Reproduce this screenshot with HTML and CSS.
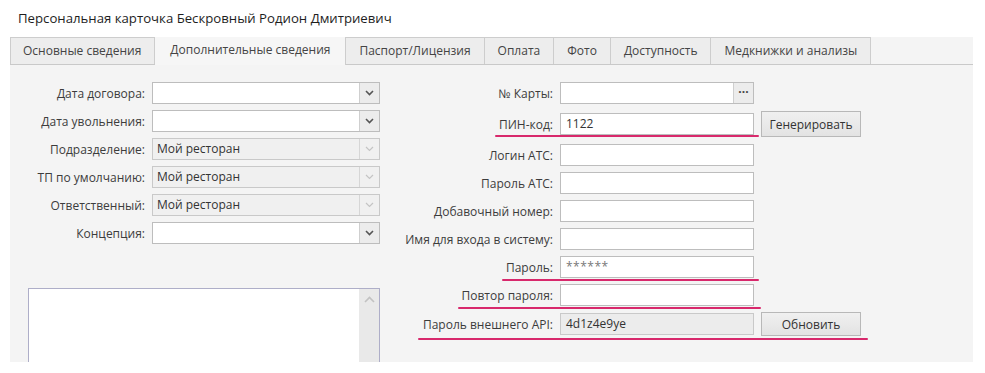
FILE: index.html
```html
<!DOCTYPE html>
<html lang="ru">
<head>
    <meta charset="UTF-8">
    <meta name="viewport" content="width=device-width, initial-scale=1.0">
    <title>Персональная карточка</title>
    <link rel="stylesheet" href="styles.css">
</head>
<body>

    <!-- Заголовок карточки -->
    <h1 class="card-title">Персональная карточка Бескровный Родион Дмитриевич</h1>

    <div class="card">
        <!-- Вкладки -->
        <ul class="tabs">
            <li class="tab">Основные сведения</li>
            <li class="tab active">Дополнительные сведения</li>
            <li class="tab">Паспорт/Лицензия</li>
            <li class="tab">Оплата</li>
            <li class="tab">Фото</li>
            <li class="tab">Доступность</li>
            <li class="tab">Медкнижки и анализы</li>
        </ul>

        <div class="card-body">
            <!-- Левая колонка -->
            <div class="col-left">
                <div class="form-left">
                    <label class="lbl">Дата договора:</label>
                    <div class="combo">
                        <span class="combo-text"></span>
                        <span class="combo-btn"><svg width="9" height="6" viewBox="0 0 9 6"><polyline points="1,1 4.5,4.5 8,1" fill="none" stroke="#555" stroke-width="1.6"/></svg></span>
                    </div>

                    <label class="lbl">Дата увольнения:</label>
                    <div class="combo">
                        <span class="combo-text"></span>
                        <span class="combo-btn"><svg width="9" height="6" viewBox="0 0 9 6"><polyline points="1,1 4.5,4.5 8,1" fill="none" stroke="#555" stroke-width="1.6"/></svg></span>
                    </div>

                    <label class="lbl">Подразделение:</label>
                    <div class="combo disabled">
                        <span class="combo-text">Мой ресторан</span>
                        <span class="combo-btn"><svg width="9" height="6" viewBox="0 0 9 6"><polyline points="1,1 4.5,4.5 8,1" fill="none" stroke="#c4c4c4" stroke-width="1.2"/></svg></span>
                    </div>

                    <label class="lbl">ТП по умолчанию:</label>
                    <div class="combo disabled">
                        <span class="combo-text">Мой ресторан</span>
                        <span class="combo-btn"><svg width="9" height="6" viewBox="0 0 9 6"><polyline points="1,1 4.5,4.5 8,1" fill="none" stroke="#c4c4c4" stroke-width="1.2"/></svg></span>
                    </div>

                    <label class="lbl">Ответственный:</label>
                    <div class="combo disabled">
                        <span class="combo-text">Мой ресторан</span>
                        <span class="combo-btn"><svg width="9" height="6" viewBox="0 0 9 6"><polyline points="1,1 4.5,4.5 8,1" fill="none" stroke="#c4c4c4" stroke-width="1.2"/></svg></span>
                    </div>

                    <label class="lbl">Концепция:</label>
                    <div class="combo">
                        <span class="combo-text"></span>
                        <span class="combo-btn"><svg width="9" height="6" viewBox="0 0 9 6"><polyline points="1,1 4.5,4.5 8,1" fill="none" stroke="#555" stroke-width="1.6"/></svg></span>
                    </div>
                </div>

                <!-- Поле комментария -->
                <div class="memo">
                    <div class="memo-area"></div>
                    <div class="memo-scroll"><svg width="11" height="7" viewBox="0 0 11 7"><polyline points="1,6 5.5,1.5 10,6" fill="none" stroke="#c2c2c2" stroke-width="1.6"/></svg></div>
                </div>
            </div>

            <!-- Правая колонка -->
            <div class="col-right">
                <div class="row">
                    <label class="lbl">№ Карты:</label>
                    <div class="field with-dots">
                        <span class="field-text"></span>
                        <span class="dots-btn">···</span>
                    </div>
                </div>

                <div class="row row-pin">
                    <label class="lbl">ПИН-код:</label>
                    <div class="field"><span class="field-text">1122</span></div>
                    <button class="btn btn-tall">Генерировать</button>
                    <span class="mark mark-pin"></span>
                </div>

                <div class="row">
                    <label class="lbl">Логин АТС:</label>
                    <div class="field"></div>
                </div>

                <div class="row">
                    <label class="lbl">Пароль АТС:</label>
                    <div class="field"></div>
                </div>

                <div class="row">
                    <label class="lbl">Добавочный номер:</label>
                    <div class="field"></div>
                </div>

                <div class="row">
                    <label class="lbl">Имя для входа в систему:</label>
                    <div class="field"></div>
                </div>

                <div class="row">
                    <label class="lbl">Пароль:</label>
                    <div class="field"><span class="field-text stars">******</span></div>
                    <span class="mark mark-pass"></span>
                </div>

                <div class="row">
                    <label class="lbl">Повтор пароля:</label>
                    <div class="field"></div>
                    <span class="mark mark-repeat"></span>
                </div>

                <div class="row">
                    <label class="lbl">Пароль внешнего API:</label>
                    <div class="field disabled"><span class="field-text">4d1z4e9ye</span></div>
                    <button class="btn">Обновить</button>
                    <span class="mark mark-api"></span>
                </div>
            </div>
        </div>
    </div>

</body>
</html>
```

FILE: styles.css
```css
/* Сброс отступов */
* {
    box-sizing: border-box;
    margin: 0;
    padding: 0;
}

body {
    background-color: #fff;
    font-family: "Open Sans", "Liberation Sans", sans-serif;
    font-size: 12px;
    color: #3a3a3a;
}

/* Заголовок */
.card-title {
    font-size: 13.2px;
    font-weight: normal;
    line-height: 16px;
    color: #1e1e1e;
    padding: 10px 0 11px 18px;
}

/* Карточка с вкладками */
.card {
    margin-left: 10px;
    width: 963px;
    height: 325px;
    background-color: #f4f4f4;
    overflow: hidden;
}

.tabs {
    list-style: none;
    display: flex;
    align-items: flex-end;
    height: 28px;
    border-bottom: 1px solid #c9c9c9;
}

.tab {
    height: 27px;
    line-height: 25px;
    padding: 0 13px;
    background-color: #ededed;
    border: 1px solid #cdcdcd;
    border-bottom: none;
    border-left: none;
    color: #444;
}

.tab:first-child {
    border-left: 1px solid #cdcdcd;
    padding: 0 13px 0 12px;
}

.tab.active {
    height: 29px;
    margin-bottom: -1px;
    line-height: 26px;
    padding: 0 15px 0 15px;
    background-color: #f6f6f6;
}

/* Тело карточки */
.card-body {
    display: flex;
    padding-top: 17px;
}

.col-left {
    width: 370px;
}

.form-left {
    display: grid;
    grid-template-columns: 135px 228px;
    grid-auto-rows: 22px;
    column-gap: 7px;
    row-gap: 6px;
    align-items: center;
}

.lbl {
    text-align: right;
    white-space: nowrap;
    color: #3c3c3c;
}

/* Выпадающий список */
.combo {
    display: flex;
    height: 22px;
    border: 1px solid #bdbdbd;
    background-color: #fff;
}

.combo-text {
    flex: 1;
    padding-left: 4px;
    line-height: 20px;
    color: #333;
}

.combo-btn {
    width: 20px;
    display: flex;
    justify-content: center;
    align-items: center;
    background-color: #ececec;
    border-left: 1px solid #cfcfcf;
}

.combo.disabled {
    background-color: #f0f0f0;
    border-color: #c9c9c9;
}

.combo.disabled .combo-btn {
    background-color: #f0f0f0;
    border-left-color: #d6d6d6;
}

/* Комментарий */
.memo {
    display: flex;
    margin: 44px 0 0 18px;
    width: 352px;
    height: 100px;
    border: 1px solid #aeaec8;
    background-color: #fff;
}

.memo-area {
    flex: 1;
}

.memo-scroll {
    width: 20px;
    background-color: #e9e9e9;
    display: flex;
    justify-content: center;
    padding-top: 7px;
}

/* Правая колонка */
.col-right {
    display: flex;
    flex-direction: column;
    gap: 6px;
}

.row {
    position: relative;
    display: grid;
    grid-template-columns: 173px 194px 100px;
    column-gap: 7px;
    align-items: center;
    height: 22px;
}

.row-pin {
    height: 26px;
    margin: 1px 0 1px 0;
}

.field {
    display: flex;
    height: 22px;
    border: 1px solid #bdbdbd;
    background-color: #fff;
}

.field.disabled {
    background-color: #ececec;
    border-color: #c9c9c9;
}

.field-text {
    flex: 1;
    padding-left: 5px;
    line-height: 20px;
    color: #333;
}

.stars {
    color: #777;
    letter-spacing: 0.5px;
}

.dots-btn {
    width: 20px;
    text-align: center;
    line-height: 18px;
    background-color: #ececec;
    border-left: 1px solid #cfcfcf;
    color: #444;
    font-weight: bold;
}

/* Кнопки */
.btn {
    height: 24px;
    font-family: inherit;
    font-size: 12px;
    color: #333;
    background: linear-gradient(#f0f0f0, #e3e3e3);
    border: 1px solid #b8b8b8;
}

.btn-tall {
    height: 26px;
}

/* Пометки маркером */
.mark {
    position: absolute;
    height: 2px;
    background-color: #d8296c;
    border-radius: 1px;
}

.mark-pin {
    left: 115px;
    width: 264px;
    top: 24px;
}

.mark-pass {
    left: 122px;
    width: 257px;
    top: 23px;
}

.mark-repeat {
    left: 78px;
    width: 303px;
    top: 23px;
}

.mark-api {
    left: 38px;
    width: 450px;
    top: 26px;
}
```
